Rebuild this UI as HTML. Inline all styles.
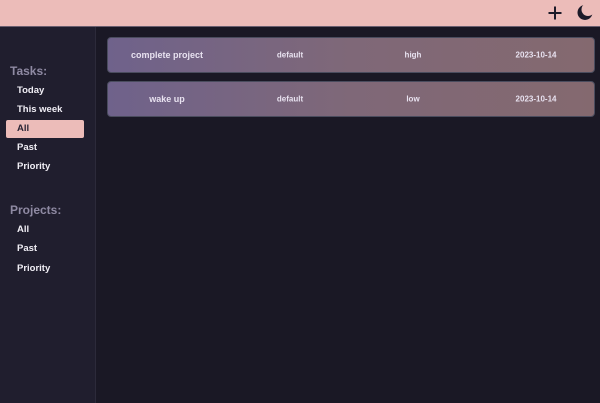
<!DOCTYPE html>
<html><head><style>
*{margin:0;padding:0;box-sizing:border-box}
body{width:600px;height:403px;background:#1a1825;font-family:"Liberation Sans","DejaVu Sans",sans-serif;font-weight:bold;overflow:hidden;position:relative}
.hdr{position:absolute;left:0;top:0;width:600px;height:27px;background:#ecbcb9;border-bottom:1px solid #6a5f70}
.side{position:absolute;left:0;top:27px;width:96px;height:376px;background:#201e2e;border-right:1px solid #2c2a3a}
.h{position:absolute;left:10px;font-size:12px;color:#8f8aa3}
.it{position:absolute;left:17px;font-size:9.5px;color:#f0eef5}
.sel{position:absolute;left:6px;top:120px;width:78px;height:18px;background:#ecbcb9;border-radius:2px}
.card{position:absolute;left:107px;width:488px;height:36px;border:1px solid #4a4c5e;border-radius:4px;background:linear-gradient(90deg,#6f628b,#7f6878 50%,#84696f)}
.card span{position:absolute;top:50%;transform:translate(-50%,-50%);font-size:8px;color:#e8e2f0;white-space:nowrap}
.card span.n{font-size:9px}
</style></head><body>
<div class="hdr">
<svg style="position:absolute;left:547px;top:5px" width="16" height="16" viewBox="0 0 16 16"><path d="M8 1.5V14.5M1.5 8H14.5" stroke="#1c1a28" stroke-width="2"/></svg>
<svg style="position:absolute;left:576px;top:3px" width="18" height="18" viewBox="0 0 18 18"><defs><mask id="m"><rect width="18" height="18" fill="#fff"/><circle cx="12" cy="6.5" r="6.5" fill="#000"/></mask></defs><circle cx="9" cy="9.5" r="7.5" fill="#1c1a28" mask="url(#m)"/></svg>
</div>
<div class="side"></div>
<div class="sel"></div>
<div class="h" style="top:64px">Tasks:</div>
<div class="it" style="top:85px">Today</div>
<div class="it" style="top:104px">This week</div>
<div class="it" style="top:123px;color:#2a2535">All</div>
<div class="it" style="top:142px">Past</div>
<div class="it" style="top:161px">Priority</div>
<div class="h" style="top:203px">Projects:</div>
<div class="it" style="top:224px">All</div>
<div class="it" style="top:243px">Past</div>
<div class="it" style="top:263px">Priority</div>
<div class="card" style="top:37px"><span class="n" style="left:59px">complete project</span><span style="left:182px">default</span><span style="left:305px">high</span><span style="left:428px">2023-10-14</span></div>
<div class="card" style="top:81px"><span class="n" style="left:59px">wake up</span><span style="left:182px">default</span><span style="left:305px">low</span><span style="left:428px">2023-10-14</span></div>
</body></html>
